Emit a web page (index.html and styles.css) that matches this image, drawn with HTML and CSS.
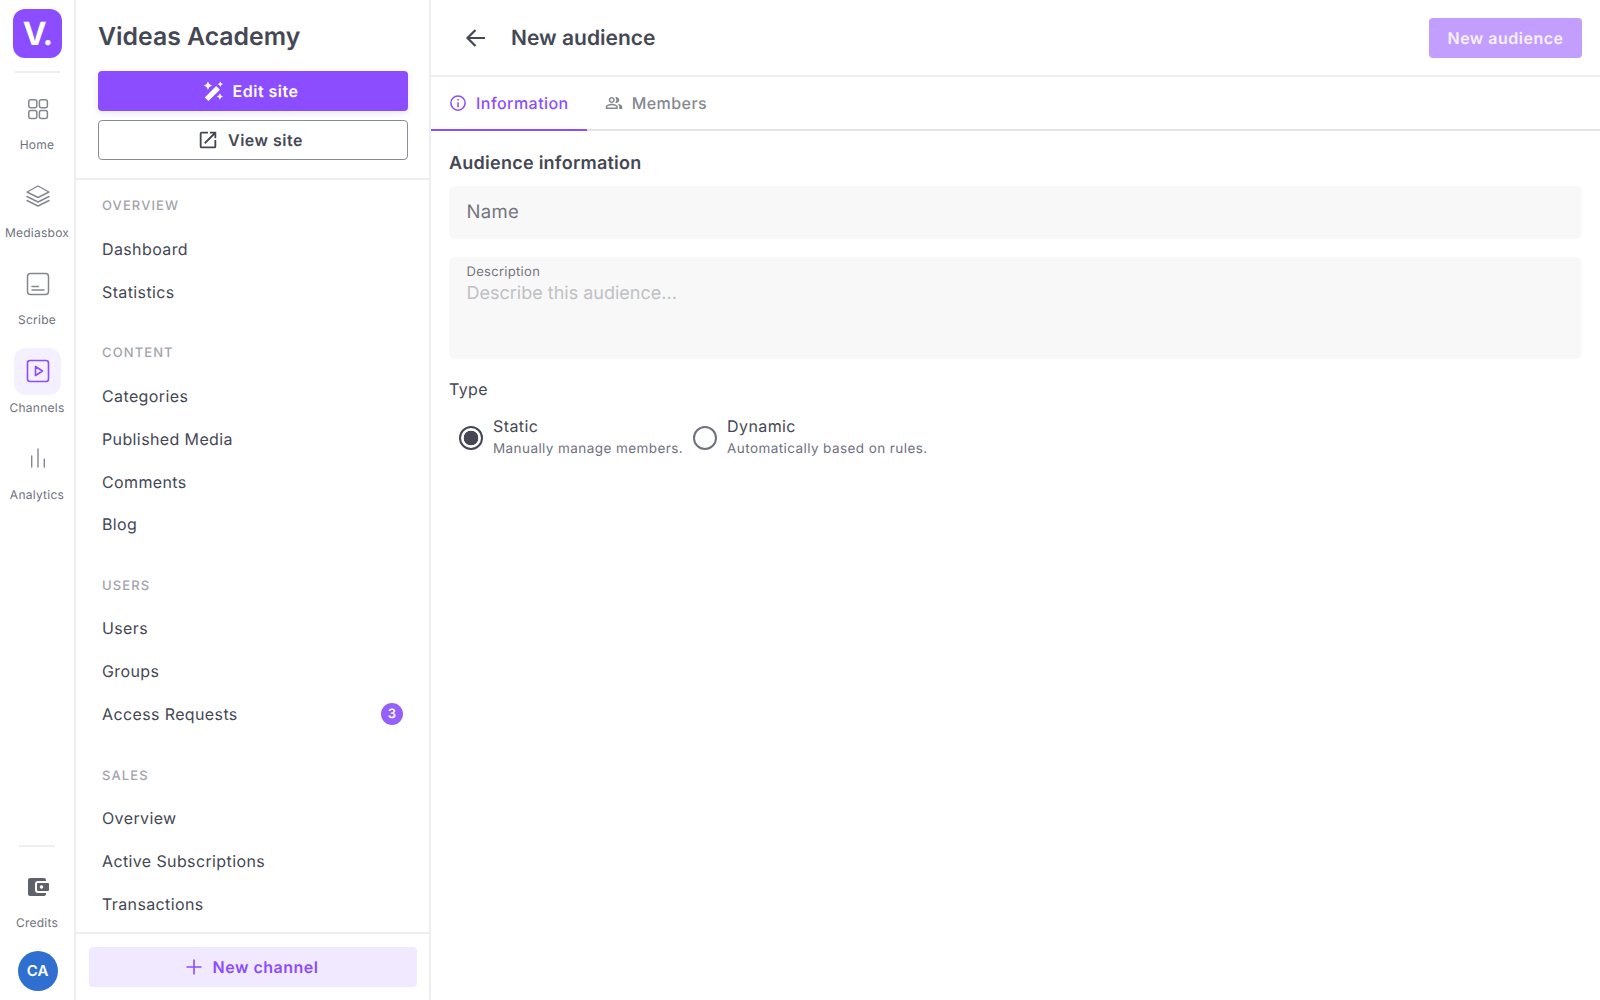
FILE: index.html
```html
<!DOCTYPE html>
<html lang="en">
<head>
    <meta charset="UTF-8">
    <title>Videas Academy - New audience</title>
    <link rel="stylesheet" href="styles.css">
</head>
<body>
    <nav class="rail">
        <div class="logo">V.</div>
        <div class="rail-line"></div>
        <a class="rail-item">
            <span class="rail-icon">
                <svg width="24" height="24" viewBox="0 0 24 24" fill="none" stroke="currentColor" stroke-width="1.5"><rect x="2.8" y="2.8" width="8" height="8" rx="2"/><rect x="13.4" y="2.8" width="8" height="8" rx="2"/><rect x="2.8" y="13.4" width="8" height="8" rx="2"/><rect x="13.4" y="13.4" width="8" height="8" rx="2"/></svg>
            </span>
            <span>Home</span>
        </a>
        <a class="rail-item">
            <span class="rail-icon">
                <svg width="24" height="24" viewBox="0 0 24 24" fill="none" stroke="currentColor" stroke-width="1.4" stroke-linejoin="round" stroke-linecap="round"><path d="M12 2 L23 8 L12 13.5 L1 8 Z"/><path d="M1 12.5 L12 18 L23 12.5"/><path d="M1 16.5 L12 22 L23 16.5"/></svg>
            </span>
            <span>Mediasbox</span>
        </a>
        <a class="rail-item">
            <span class="rail-icon">
                <svg width="24" height="24" viewBox="0 0 24 24" fill="none" stroke="currentColor" stroke-width="1.5" stroke-linecap="round"><rect x="1.5" y="1.5" width="21" height="21" rx="3"/><path d="M6 14.5h6.5M6 18h12"/></svg>
            </span>
            <span>Scribe</span>
        </a>
        <a class="rail-item active">
            <span class="rail-icon">
                <svg width="24" height="24" viewBox="0 0 24 24" fill="none" stroke="currentColor" stroke-width="1.6" stroke-linejoin="round"><rect x="1.5" y="1.5" width="21" height="21" rx="2.5"/><path d="M9.5 7.5 L16.5 12 L9.5 16.5 Z"/></svg>
            </span>
            <span>Channels</span>
        </a>
        <a class="rail-item">
            <span class="rail-icon">
                <svg width="24" height="24" viewBox="0 0 24 24" fill="none" stroke="currentColor" stroke-width="1.4" stroke-linecap="round"><path d="M5.700 20v-11M12 20V2M18.300 20v-7.700"/></svg>
            </span>
            <span>Analytics</span>
        </a>
        <div class="rail-bottom">
            <div class="rail-line"></div>
            <a class="rail-item">
                <span class="rail-icon">
                    <svg width="24" height="24" viewBox="0 0 24 24" fill="currentColor"><path fill-rule="evenodd" d="M4 3h14a2 2 0 0 1 2 2v1h-8a3 3 0 0 0-3 3v6a3 3 0 0 0 3 3h8v1a2 2 0 0 1-2 2H4a2 2 0 0 1-2-2V5a2 2 0 0 1 2-2zm8 5h10a1 1 0 0 1 1 1v6a1 1 0 0 1-1 1H12a1 1 0 0 1-1-1V9a1 1 0 0 1 1-1zm3.500 2.200a1.800 1.800 0 1 0 0 3.600 1.800 1.800 0 0 0 0-3.600z"/></svg>
                </span>
                <span>Credits</span>
            </a>
            <div class="avatar">CA</div>
        </div>
    </nav>

    <aside class="sidebar">
        <div class="site-box">
            <h2>Videas Academy</h2>
            <a class="btn btn-primary">
                <svg width="22" height="22" viewBox="0 0 24 24" fill="currentColor"><path d="M15.500 6.500 19.500 10.500 7 23 3 19z"/><path d="M6.500 1.500 8 4.500l3 1.500-3 1.500L6.500 10.500 5 7.500 2 6l3-1.500zM19.500 14.500l1.200 2.300L23 18l-2.300 1.200L19.500 21.500l-1.200-2.300L16 18l2.300-1.200zM20 1.500l1 2 2 1-2 1-1 2-1-2-2-1 2-1z"/></svg>
                Edit site
            </a>
            <a class="btn btn-outline">
                <svg width="22" height="22" viewBox="0 0 24 24" fill="currentColor"><path d="M19 19H5V5h7V3H5a2 2 0 0 0-2 2v14a2 2 0 0 0 2 2h14a2 2 0 0 0 2-2v-7h-2v7zM14 3v2h3.590l-9.830 9.830 1.410 1.410L19 6.410V10h2V3h-7z"/></svg>
                View site
            </a>
        </div>
        <div class="menu">
            <div class="menu-title">OVERVIEW</div>
            <a class="menu-item">Dashboard</a>
            <a class="menu-item">Statistics</a>
            <div class="menu-title">CONTENT</div>
            <a class="menu-item">Categories</a>
            <a class="menu-item">Published Media</a>
            <a class="menu-item">Comments</a>
            <a class="menu-item">Blog</a>
            <div class="menu-title">USERS</div>
            <a class="menu-item">Users</a>
            <a class="menu-item">Groups</a>
            <a class="menu-item">Access Requests <span class="badge">3</span></a>
            <div class="menu-title">SALES</div>
            <a class="menu-item">Overview</a>
            <a class="menu-item">Active Subscriptions</a>
            <a class="menu-item">Transactions</a>
        </div>
        <div class="sidebar-foot">
            <a class="btn btn-soft">
                <svg width="20" height="20" viewBox="0 0 20 20" fill="none" stroke="currentColor" stroke-width="1.6"><path d="M10 2.500v15M2.500 10h15"/></svg>
                New channel
            </a>
        </div>
    </aside>

    <main class="main">
        <header class="topbar">
            <svg class="back" width="24" height="24" viewBox="0 0 24 24" fill="none" stroke="currentColor" stroke-width="2.2"><path d="M21 12H3.500M11.500 4l-8 8 8 8"/></svg>
            <h1>New audience</h1>
            <a class="btn btn-disabled">New audience</a>
        </header>
        <div class="tabs">
            <a class="tab active">
                <svg width="18" height="18" viewBox="0 0 24 24" fill="none" stroke="currentColor" stroke-width="2"><circle cx="12" cy="12" r="9.500"/><path d="M12 11v6.500M12 6.500v2.200"/></svg>
                Information
            </a>
            <a class="tab">
                <svg width="18" height="18" viewBox="0 0 24 24" fill="currentColor"><path d="M16.670 13.130C18.040 14.060 19 15.320 19 17v3h4v-3c0-2.180-3.570-3.470-6.330-3.870zM15 12c2.210 0 4-1.790 4-4s-1.790-4-4-4c-.47 0-.91.100-1.330.24a5.980 5.980 0 0 1 0 7.520c.42.140.86.240 1.330.24zM9 12c2.210 0 4-1.790 4-4s-1.790-4-4-4-4 1.790-4 4 1.790 4 4 4zm0-6c1.100 0 2 .9 2 2s-.9 2-2 2-2-.9-2-2 .9-2 2-2zM9 13c-2.670 0-8 1.340-8 4v3h16v-3c0-2.660-5.330-4-8-4zm6 5H3v-.99C3.200 16.290 6.300 15 9 15s5.800 1.290 6 2v1z"/></svg>
                Members
            </a>
        </div>
        <section class="content">
            <h3>Audience information</h3>
            <div class="field field-name">Name</div>
            <div class="field field-desc">
                <label>Description</label>
                <div class="placeholder">Describe this audience...</div>
            </div>
            <div class="type-label">Type</div>
            <div class="radios">
                <div class="radio checked">
                    <span class="radio-mark"></span>
                    <div>
                        <div class="radio-title">Static</div>
                        <div class="radio-sub">Manually manage members.</div>
                    </div>
                </div>
                <div class="radio">
                    <span class="radio-mark"></span>
                    <div>
                        <div class="radio-title">Dynamic</div>
                        <div class="radio-sub">Automatically based on rules.</div>
                    </div>
                </div>
            </div>
        </section>
    </main>
</body>
</html>
```
FILE: styles.css
```css
* {
    box-sizing: border-box;
}
body {
    margin: 0;
    height: 1000px;
    display: flex;
    overflow: hidden;
    background-color: #fff;
    color: #454854;
    font-family: Inter, "Liberation Sans", sans-serif;
    text-rendering: geometricPrecision;
}
a {
    color: inherit;
    text-decoration: none;
}
svg {
    flex: none;
    display: block;
}

/* far left rail */
.rail {
    width: 76px;
    flex: none;
    display: flex;
    flex-direction: column;
    align-items: center;
    padding-top: 9px;
    border-right: 2px solid #eeeef0;
}
.logo {
    width: 49px;
    height: 49px;
    margin-left: 1px;
    border-radius: 12px;
    background-color: #8b4dff;
    color: #fff;
    font-size: 32px;
    font-weight: 700;
    letter-spacing: -1px;
    line-height: 49px;
    text-align: center;
}
.rail-line {
    width: 45px;
    height: 2px;
    margin: 13px 0 12px;
    background-color: #eeeef0;
}
.rail-item {
    width: 74px;
    height: 87.6px;
    display: flex;
    flex-direction: column;
    align-items: center;
    color: #6f727d;
    font-size: 12px;
    letter-spacing: 0.25px;
}
.rail-icon {
    width: 47px;
    height: 47px;
    display: flex;
    align-items: center;
    justify-content: center;
    margin-bottom: 5px;
    margin-left: 1px;
    border-radius: 12px;
    color: #85878f;
}
.rail-item.active .rail-icon {
    background-color: #f5f0ff;
    color: #8b4dff;
}
.rail-bottom {
    margin-top: auto;
    display: flex;
    flex-direction: column;
    align-items: center;
}
.rail-bottom .rail-line {
    width: 36px;
    margin: 0 0 16px;
}
.rail-bottom .rail-icon {
    color: #5f626c;
}
.rail-bottom .rail-item {
    height: 88px;
}
.avatar {
    width: 40px;
    height: 40px;
    margin-bottom: 9px;
    margin-left: 1px;
    border-radius: 50%;
    background-color: #2f6fd0;
    color: #fff;
    font-size: 15px;
    font-weight: 600;
    line-height: 40px;
    text-align: center;
}

/* second column */
.sidebar {
    width: 355px;
    flex: none;
    display: flex;
    flex-direction: column;
    border-right: 2px solid #eeeef0;
}
.site-box {
    padding: 0 21px 18px 22px;
    border-bottom: 2px solid #eeeef0;
}
.site-box h2 {
    margin: 0 0 14px;
    height: 57px;
    padding-top: 19px;
    font-size: 24.8px;
    font-weight: 600;
    line-height: 34px;
}
.btn {
    height: 40px;
    display: flex;
    align-items: center;
    justify-content: center;
    gap: 9px;
    border-radius: 4px;
    font-size: 16px;
    font-weight: 600;
    letter-spacing: 0.5px;
}
.site-box .btn {
    padding-right: 6px;
}
.btn-primary {
    background-color: #8b4dff;
    color: #fff;
    box-shadow: 0 2px 6px rgba(60, 40, 110, 0.12);
}
.btn-outline {
    margin-top: 9px;
    border: 1px solid #8b8d96;
    color: #454854;
}
.menu {
    flex: 1;
    overflow: hidden;
    padding: 3px 0 0 26px;
}
.menu-title {
    height: 45px;
    margin-top: 16px;
    padding-top: 14.5px;
    color: #a3a5ac;
    font-size: 13px;
    font-weight: 500;
    letter-spacing: 1.1px;
    line-height: 18px;
}
.menu-title:first-child {
    margin-top: 0;
    padding-top: 13.5px;
}
.menu-item {
    height: 42.9px;
    padding-right: 26px;
    padding-bottom: 1px;
    display: flex;
    align-items: center;
    justify-content: space-between;
    font-size: 16px;
    letter-spacing: 0.38px;
}
.badge {
    width: 22px;
    height: 22px;
    border-radius: 50%;
    background-color: #955ffa;
    color: #fff;
    font-size: 13px;
    font-weight: 600;
    letter-spacing: 0;
    line-height: 22px;
    text-align: center;
}
.sidebar-foot {
    height: 68px;
    padding: 13px 12px 13px 13px;
    border-top: 2px solid #eeeef0;
}
.btn-soft {
    padding-right: 4px;
    background-color: #f1e9ff;
    color: #8b4dff;
}

/* main area */
.main {
    flex: 1;
    min-width: 0;
}
.topbar {
    height: 77px;
    padding: 0 18px 0 33px;
    display: flex;
    align-items: center;
    border-bottom: 2px solid #eeeef0;
}
.topbar h1 {
    flex: 1;
    margin: 1px 0 0 23px;
    font-size: 21px;
    font-weight: 600;
}
.back {
    color: #454854;
}
.btn-disabled {
    width: 153px;
    background-color: #c29eff;
    color: #f6f0ff;
}
.tabs {
    height: 54px;
    display: flex;
    border-bottom: 2px solid #e4e4e7;
}
.tab {
    height: 54px;
    padding: 0 18px;
    display: flex;
    align-items: center;
    gap: 9px;
    border-bottom: 2px solid transparent;
    color: #85878f;
    font-size: 16px;
    font-weight: 500;
    letter-spacing: 0.45px;
}
.tab.active {
    border-bottom-color: #8b4dff;
    color: #8b4dff;
}
.content {
    padding: 21px 18px 20px;
}
.content h3 {
    margin: 0 0 10px;
    font-size: 18px;
    font-weight: 600;
    letter-spacing: 0.25px;
    line-height: 24px;
}
.field {
    border-radius: 6px;
    background-color: #f8f8f8;
    padding-left: 17.5px;
}
.field-name {
    height: 53px;
    color: #74767f;
    font-size: 18.5px;
    letter-spacing: 0.3px;
    line-height: 53px;
}
.field-desc {
    height: 102px;
    margin-top: 18px;
    padding-top: 6px;
}
.field-desc label {
    display: block;
    margin-bottom: 1px;
    color: #74767f;
    font-size: 13px;
    letter-spacing: 0.3px;
    line-height: 18px;
}
.placeholder {
    color: #c0c1c5;
    font-size: 18px;
    line-height: 24px;
}
.type-label {
    margin-top: 19px;
    font-size: 16px;
    letter-spacing: 0.4px;
    line-height: 22px;
}
.radios {
    display: flex;
    margin-top: 15px;
    padding-left: 10px;
}
.radio {
    display: flex;
    align-items: center;
    gap: 10px;
    margin-right: 10px;
}
.radio-mark {
    width: 24px;
    height: 24px;
    flex: none;
    border: 2px solid #6f727d;
    border-radius: 50%;
}
.radio.checked .radio-mark {
    border-color: #454854;
    background: radial-gradient(circle, #454854 0, #454854 7px, #fff 7.6px);
}
.radio-title {
    font-size: 16px;
    letter-spacing: 0.4px;
    line-height: 22px;
}
.radio-sub {
    margin-top: 2px;
    color: #6f727d;
    font-size: 13.5px;
    letter-spacing: 0.42px;
    line-height: 21px;
}
```
